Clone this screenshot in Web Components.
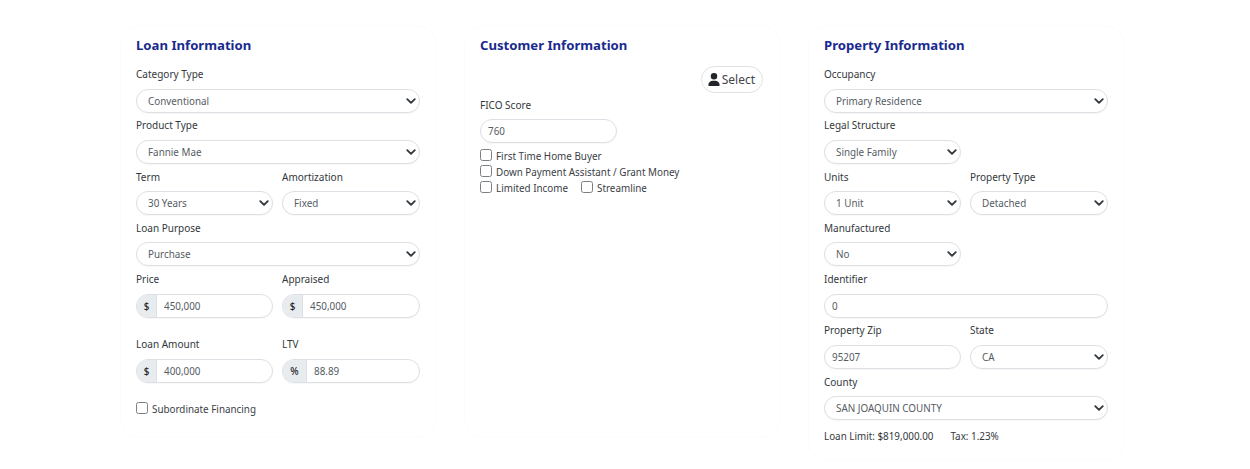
<!DOCTYPE html>
<html lang="en">
<head>
<meta charset="utf-8">
<title>Loan form</title>
<style>
  html, body { margin: 0; background: #fff; }
  body { font-family: "Noto Sans", "Open Sans", sans-serif; font-size: 9.85px; color: #212529; }
  .page {
    display: grid;
    grid-template-columns: repeat(3, 317px);
    column-gap: 27px;
    padding: 25px 0 0 120px;
    align-items: start;
  }
  .two { display: grid; grid-template-columns: 137px 138px; column-gap: 9px; }
  .one-half { width: 137px; }
  .checks { display: flex; flex-direction: column; }
  .inline { display: flex; gap: 13px; }
</style>
</head>
<body>

<script>
const CHEVRON = `<svg class="chev" width="10" height="10" viewBox="0 0 16 16" aria-hidden="true"><path fill="none" stroke="#343a40" stroke-linecap="round" stroke-linejoin="round" stroke-width="3" d="M2 5l6 6 6-6"/></svg>`;

const boxCss = `
  .box {
    box-sizing: border-box; height: 24px; border: 1px solid #dcdfe4; border-radius: 12px;
    background: #fff; display: flex; align-items: center; color: #555c63;
    font-size: 9.85px; box-shadow: 0 1px 1px rgba(0,0,0,.03); overflow: hidden;
  }
`;

class LoanCard extends HTMLElement {
  constructor() {
    super();
    this.attachShadow({ mode: 'open' });
  }
  connectedCallback() {
    this.shadowRoot.innerHTML = `
      <style>
        :host { display: block; box-sizing: border-box; padding: 11px 16px 0 15px; border: 1px solid #fcfcfd; border-radius: 20px; }
        h2 { margin: 0; font-size: 13.15px; line-height: 16px; font-weight: 700; color: #1a2a8e; }
        .body { margin-top: 13px; }
      </style>
      <h2>${this.getAttribute('heading')}</h2>
      <div class="body"><slot></slot></div>`;
  }
}

class LoanField extends HTMLElement {
  constructor() {
    super();
    this.attachShadow({ mode: 'open' });
  }
  connectedCallback() {
    this.shadowRoot.innerHTML = `
      <style>
        :host { display: block; padding-bottom: 4.75px; }
        label { display: block; height: 22.5px; line-height: 15px; padding-top: 1px; box-sizing: border-box; color: #33383d; font-size: 10px; }
      </style>
      <label>${this.getAttribute('label')}</label>
      <slot></slot>`;
  }
}

class LoanSelect extends HTMLElement {
  constructor() {
    super();
    this.attachShadow({ mode: 'open' });
  }
  connectedCallback() {
    this.shadowRoot.innerHTML = `
      <style>
        :host { display: block; }
        ${boxCss}
        .box { padding: 0 3px 0 11px; justify-content: space-between; }
        .chev { flex: none; }
      </style>
      <div class="box" role="combobox"><span><slot></slot></span>${CHEVRON}</div>`;
  }
}

class LoanInput extends HTMLElement {
  constructor() {
    super();
    this.attachShadow({ mode: 'open' });
  }
  connectedCallback() {
    const prefix = this.getAttribute('prefix');
    this.shadowRoot.innerHTML = `
      <style>
        :host { display: block; }
        ${boxCss}
        .pre { box-sizing: border-box; flex: none; width: ${prefix === '%' ? 24 : 20}px; align-self: stretch; display: flex; align-items: center; justify-content: center; background: #e9ecef; border-right: 1px solid #dcdfe4; color: #212529; font-weight: 500; }
        .val { padding-left: 7px; }
      </style>
      <div class="box" role="textbox">${prefix ? `<span class="pre">${prefix}</span>` : ''}<span class="val"><slot></slot></span></div>`;
  }
}

class LoanCheck extends HTMLElement {
  constructor() {
    super();
    this.attachShadow({ mode: 'open' });
  }
  connectedCallback() {
    this.shadowRoot.innerHTML = `
      <style>
        :host { display: inline-flex; align-items: center; height: 16px; color: #3a4046; font-size: 9.85px; }
        input { appearance: none; -webkit-appearance: none; box-sizing: border-box; width: 12px; height: 12px; margin: 0 4px 0 0; border: 1px solid #7a7f85; border-radius: 2.5px; background: #fff; position: relative; top: -1px; }
      </style>
      <input type="checkbox"><span><slot></slot></span>`;
  }
}

class PickButton extends HTMLElement {
  constructor() {
    super();
    this.attachShadow({ mode: 'open' });
  }
  connectedCallback() {
    this.shadowRoot.innerHTML = `
      <style>
        :host { display: flex; justify-content: flex-end; padding-right: 1px; }
        button { box-sizing: border-box; height: 27px; padding: 0 7px 0 6px; border: 1px solid #dee2e6; border-radius: 14px; background: #fff; display: flex; align-items: center; gap: 2px; font: inherit; font-size: 12px; color: #3f454b; }
        svg { display: block; }
      </style>
      <button type="button"><svg width="12" height="13" viewBox="0 0 448 512" aria-hidden="true"><path fill="#212529" d="M224 256a128 128 0 1 0 0-256 128 128 0 1 0 0 256zm-45.700 48C79.800 304 0 383.800 0 482.300 0 498.700 13.300 512 29.700 512h388.600c16.400 0 29.700-13.300 29.700-29.700C448 383.800 368.200 304 269.700 304h-91.400z"/></svg><span><slot></slot></span></button>`;
  }
}

customElements.define('loan-card', LoanCard);
customElements.define('loan-field', LoanField);
customElements.define('loan-select', LoanSelect);
customElements.define('loan-input', LoanInput);
customElements.define('loan-check', LoanCheck);
customElements.define('pick-button', PickButton);
</script>

<div class="page">
  <loan-card heading="Loan Information" style="height:413px">
    <loan-field label="Category Type"><loan-select>Conventional</loan-select></loan-field>
    <loan-field label="Product Type"><loan-select>Fannie Mae</loan-select></loan-field>
    <div class="two">
      <loan-field label="Term"><loan-select>30 Years</loan-select></loan-field>
      <loan-field label="Amortization"><loan-select>Fixed</loan-select></loan-field>
    </div>
    <loan-field label="Loan Purpose"><loan-select>Purchase</loan-select></loan-field>
    <div class="two">
      <loan-field label="Price"><loan-input prefix="$">450,000</loan-input></loan-field>
      <loan-field label="Appraised"><loan-input prefix="$">450,000</loan-input></loan-field>
    </div>
    <div class="two" style="margin-top:13.75px">
      <loan-field label="Loan Amount"><loan-input prefix="$">400,000</loan-input></loan-field>
      <loan-field label="LTV"><loan-input prefix="%">88.89</loan-input></loan-field>
    </div>
    <div style="margin-top:14px"><loan-check>Subordinate Financing</loan-check></div>
  </loan-card>

  <loan-card heading="Customer Information" style="height:413px">
    <pick-button>Select</pick-button>
    <div class="one-half" style="margin-top:3.5px">
      <loan-field label="FICO Score"><loan-input>760</loan-input></loan-field>
    </div>
    <div class="checks" style="margin-top:.25px">
      <loan-check>First Time Home Buyer</loan-check>
      <loan-check>Down Payment Assistant / Grant Money</loan-check>
      <div class="inline"><loan-check>Limited Income</loan-check><loan-check>Streamline</loan-check></div>
    </div>
  </loan-card>

  <loan-card heading="Property Information" style="height:436px">
    <loan-field label="Occupancy"><loan-select>Primary Residence</loan-select></loan-field>
    <div class="one-half"><loan-field label="Legal Structure"><loan-select>Single Family</loan-select></loan-field></div>
    <div class="two">
      <loan-field label="Units"><loan-select>1 Unit</loan-select></loan-field>
      <loan-field label="Property Type"><loan-select>Detached</loan-select></loan-field>
    </div>
    <div class="one-half"><loan-field label="Manufactured"><loan-select>No</loan-select></loan-field></div>
    <loan-field label="Identifier"><loan-input>0</loan-input></loan-field>
    <div class="two">
      <loan-field label="Property Zip"><loan-input>95207</loan-input></loan-field>
      <loan-field label="State"><loan-select>CA</loan-select></loan-field>
    </div>
    <loan-field label="County"><loan-select>SAN JOAQUIN COUNTY</loan-select></loan-field>
    <div style="margin-top:4.5px;line-height:14px;color:#33383d"><span>Loan Limit: $819,000.00</span><span style="margin-left:17px">Tax: 1.23%</span></div>
  </loan-card>
</div>
</body>
</html>
